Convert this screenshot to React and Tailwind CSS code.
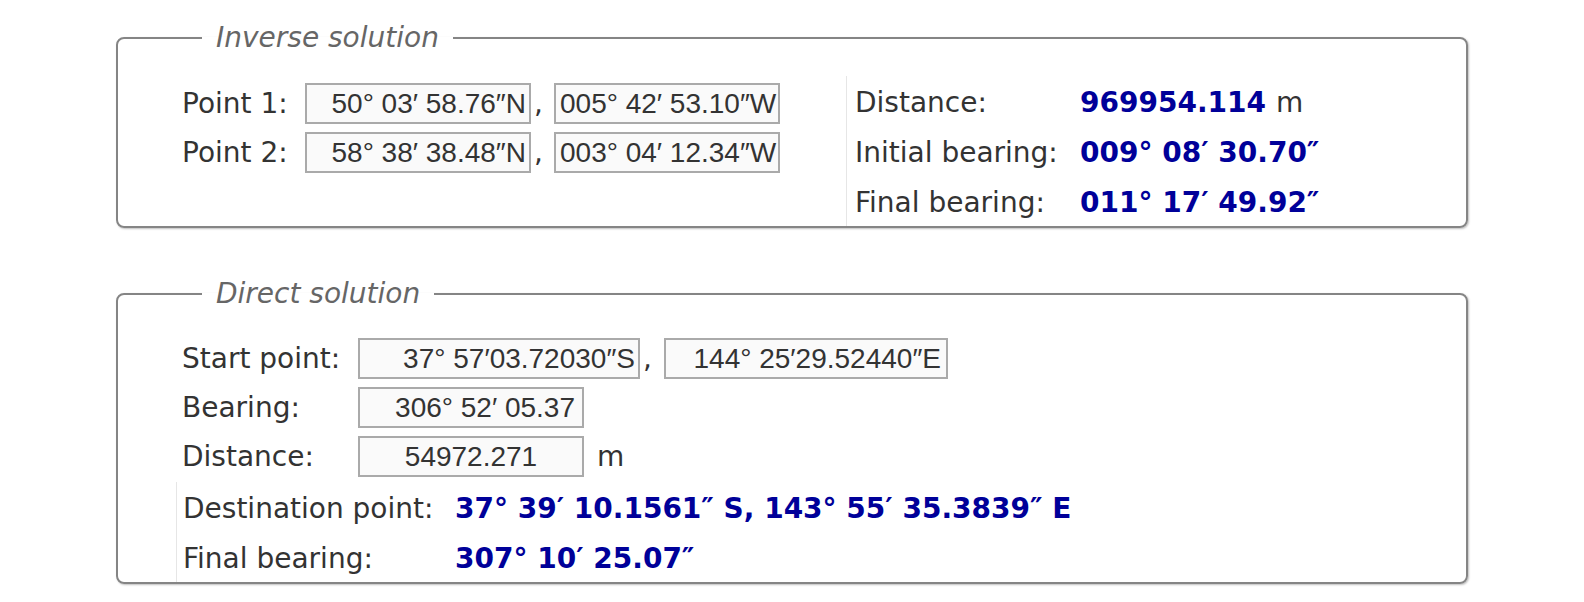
import React from "react";

const label = "font-['DejaVu_Sans',Verdana,sans-serif] text-[28px] leading-[32px] text-[#333]";
const val = "font-['DejaVu_Sans',Verdana,sans-serif] text-[28px] leading-[32px] font-bold text-[#000099]";
const inp =
  "h-[41px] shrink-0 border-2 border-[#aaaaaa] bg-[#fafafa] font-['Liberation_Sans',Arial,sans-serif] text-[28px] text-[#333] outline-none";

function Inp({ w, value, align }) {
  return <input readOnly value={value} className={`${inp} ${w} ${align}`} />;
}

const row = "flex h-[50px] items-center pt-[4px]";

export default function App() {
  return (
    <div className="min-h-[602px] bg-white pt-[22px]">
      <fieldset className="mx-auto w-[1352px] rounded-[8px] border-2 border-[#858585] p-0 shadow-[1px_1px_2px_rgba(0,0,0,0.25)]">
        <legend className="ml-[84px] px-[14px] font-['DejaVu_Sans',Verdana,sans-serif] text-[28px] leading-[32px] italic text-[#666]">
          Inverse solution
        </legend>
        <div className="flex pt-[22px]">
          <div className="flex w-[728px] shrink-0 flex-col gap-[8px] pl-[64px] pt-[7px]">
            <div className="flex h-[41px] items-center">
              <span className={`${label} w-[123px] shrink-0`}>Point 1:</span>
              <Inp w="w-[226px]" value={"50° 03′ 58.76″N"} align="text-right pr-[3px]" />
              <span className={`${label} w-[23px] shrink-0 pl-[3px]`}>,</span>
              <Inp w="w-[226px]" value={"005° 42′ 53.10″W"} align="text-left pl-[4px]" />
            </div>
            <div className="flex h-[41px] items-center">
              <span className={`${label} w-[123px] shrink-0`}>Point 2:</span>
              <Inp w="w-[226px]" value={"58° 38′ 38.48″N"} align="text-right pr-[3px]" />
              <span className={`${label} w-[23px] shrink-0 pl-[3px]`}>,</span>
              <Inp w="w-[226px]" value={"003° 04′ 12.34″W"} align="text-left pl-[4px]" />
            </div>
          </div>
          <div className="flex flex-col border-l border-[#e6e6e6] pl-[8px]">
            <div className={row}>
              <span className={`${label} w-[225px] shrink-0`}>Distance:</span>
              <span className={val}>969954.114</span>
              <span className={`${label} ml-[10px]`}>m</span>
            </div>
            <div className={row}>
              <span className={`${label} w-[225px] shrink-0`}>Initial bearing:</span>
              <span className={val}>{"009° 08′ 30.70″"}</span>
            </div>
            <div className={row}>
              <span className={`${label} w-[225px] shrink-0`}>Final bearing:</span>
              <span className={val}>{"011° 17′ 49.92″"}</span>
            </div>
          </div>
        </div>
      </fieldset>

      <fieldset className="mx-auto mt-[50px] w-[1352px] rounded-[8px] border-2 border-[#858585] p-0 shadow-[1px_1px_2px_rgba(0,0,0,0.25)]">
        <legend className="ml-[84px] px-[14px] font-['DejaVu_Sans',Verdana,sans-serif] text-[28px] leading-[32px] italic text-[#666]">
          Direct solution
        </legend>
        <div className="flex flex-col pt-[28px]">
          <div className="flex flex-col gap-[8px] pl-[64px]">
            <div className="flex h-[41px] items-center">
              <span className={`${label} w-[176px] shrink-0`}>Start point:</span>
              <Inp w="w-[282px]" value={"37° 57′03.72030″S"} align="text-right pr-[3px]" />
              <span className={`${label} w-[24px] shrink-0 pl-[3px]`}>,</span>
              <Inp w="w-[284px]" value={"144° 25′29.52440″E"} align="text-right pr-[5px]" />
            </div>
            <div className="flex h-[41px] items-center">
              <span className={`${label} w-[176px] shrink-0`}>Bearing:</span>
              <Inp w="w-[226px]" value={"306° 52′ 05.37"} align="text-right pr-[7px]" />
            </div>
            <div className="flex h-[41px] items-center">
              <span className={`${label} w-[176px] shrink-0`}>Distance:</span>
              <Inp w="w-[226px]" value={"54972.271"} align="text-center" />
              <span className={`${label} ml-[13px]`}>m</span>
            </div>
          </div>
          <div className="ml-[58px] mt-[5px] flex flex-col border-l border-[#e6e6e6] pl-[6px]">
            <div className={row}>
              <span className={`${label} w-[272px] shrink-0`}>Destination point:</span>
              <span className={val}>{"37° 39′ 10.1561″ S, 143° 55′ 35.3839″ E"}</span>
            </div>
            <div className={row}>
              <span className={`${label} w-[272px] shrink-0`}>Final bearing:</span>
              <span className={val}>{"307° 10′ 25.07″"}</span>
            </div>
          </div>
        </div>
      </fieldset>
    </div>
  );
}
